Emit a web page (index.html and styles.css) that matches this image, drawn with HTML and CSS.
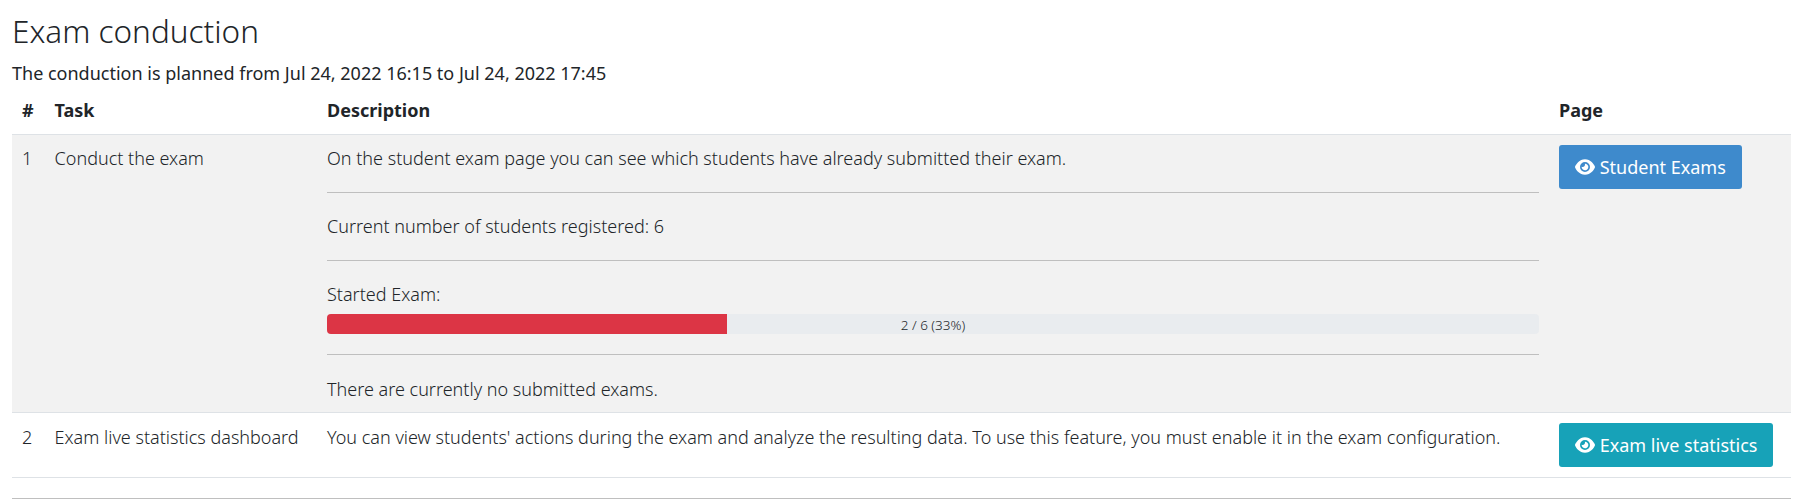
FILE: index.html
```html
<!DOCTYPE html>
<html lang="en">
<head>
<meta charset="utf-8">
<title>Exam conduction</title>
<link rel="stylesheet" href="styles.css">
</head>
<body>
<main class="page">
<h3 class="title">Exam conduction</h3>
<p class="planned">The conduction is planned from Jul 24, 2022 16:15 to Jul 24, 2022 17:45</p>
<table class="table">
<colgroup><col class="col-num"><col class="col-task"><col class="col-desc"><col class="col-page"></colgroup>
<thead><tr><th>#</th><th class="task">Task</th><th>Description</th><th>Page</th></tr></thead>
<tbody>
<tr class="striped">
<td>1</td><td class="task">Conduct the exam</td>
<td>On the student exam page you can see which students have already submitted their exam.
<hr class="rule">
<div>Current number of students registered: 6</div>
<hr class="rule">
<div>Started Exam:</div>
<div class="progress"><div class="bar" style="width:33%"></div><span class="progress-label">2 / 6 (33%)</span></div>
<hr class="rule last">
<div>There are currently no submitted exams.</div></td>
<td><a class="btn primary"><svg class="eye" viewBox="0 0 576 512"><path fill="currentColor" d="M288 32c-80.8 0-145.5 36.8-192.6 80.6C48.6 156 17.3 208 2.5 243.7c-3.3 7.9-3.3 16.7 0 24.6C17.3 304 48.6 356 95.4 399.4C142.5 443.2 207.2 480 288 480s145.5-36.8 192.6-80.6c46.8-43.5 78.1-95.4 93-131.1c3.3-7.9 3.3-16.7 0-24.6c-14.9-35.7-46.2-87.7-93-131.1C433.5 68.8 368.8 32 288 32zM144 256a144 144 0 1 1 288 0 144 144 0 1 1-288 0zm144-64c0 35.3-28.7 64-64 64c-7.1 0-13.9-1.2-20.3-3.3c-5.5-1.8-11.9 1.6-11.7 7.4c.3 6.9 1.3 13.8 3.2 20.7c13.7 51.2 66.4 81.6 117.6 67.9s81.6-66.4 67.9-117.6c-11.1-41.5-47.8-69.4-88.6-71.1c-5.8-.2-9.2 6.1-7.4 11.7c2.1 6.4 3.3 13.2 3.3 20.3z"/></svg> Student Exams</a></td>
</tr>
<tr class="compact">
<td>2</td><td class="task">Exam live statistics dashboard</td>
<td>You can view students' actions during the exam and analyze the resulting data. To use this feature, you must enable it in the exam configuration.</td>
<td class="action"><a class="btn info"><svg class="eye" viewBox="0 0 576 512"><path fill="currentColor" d="M288 32c-80.8 0-145.5 36.8-192.6 80.6C48.6 156 17.3 208 2.5 243.7c-3.3 7.9-3.3 16.7 0 24.6C17.3 304 48.6 356 95.4 399.4C142.5 443.2 207.2 480 288 480s145.5-36.8 192.6-80.6c46.8-43.5 78.1-95.4 93-131.1c3.3-7.9 3.3-16.7 0-24.6c-14.9-35.7-46.2-87.7-93-131.1C433.5 68.8 368.8 32 288 32zM144 256a144 144 0 1 1 288 0 144 144 0 1 1-288 0zm144-64c0 35.3-28.7 64-64 64c-7.1 0-13.9-1.2-20.3-3.3c-5.5-1.8-11.9 1.6-11.7 7.4c.3 6.9 1.3 13.8 3.2 20.7c13.7 51.2 66.4 81.6 117.6 67.9s81.6-66.4 67.9-117.6c-11.1-41.5-47.8-69.4-88.6-71.1c-5.8-.2-9.2 6.1-7.4 11.7c2.1 6.4 3.3 13.2 3.3 20.3z"/></svg> Exam live statistics</a></td>
</tr>
</tbody>
</table>
<hr class="end">
</main>
</body>
</html>
```
FILE: styles.css
```css
* { box-sizing: border-box; }
body { margin: 0; background: #fff; color: #212529; font: 400 18px/27px "Noto Sans", sans-serif; overflow: hidden; }
.page { padding: 12px 22px 0 12px; }
.title { margin: 0 0 10px; font-size: 31.5px; line-height: 38px; font-weight: 300; }
.planned { margin: 0; }
.table { width: 1779px; table-layout: fixed; border-collapse: collapse; border-bottom: 1px solid #dee2e6; }
.col-num { width: 32px; }
.col-task { width: 273px; }
.col-desc { width: 1232px; }
.table th { text-align: left; font-weight: 700; padding: 10px; }
.table td { vertical-align: top; font-weight: 300; padding: 10px; border-top: 1px solid #dee2e6; white-space: nowrap; }
.table .task { padding-left: 10.6px; }
.table .compact td { padding-top: 11px; }
.table .compact .action { padding-top: 10px; }
.striped { background: #f2f2f2; }
.striped td:nth-child(3) { padding-bottom: 9px; }
.rule { margin: 20px 0; border: 0; border-top: 1px solid #bfbfbf; }
.rule.last { margin-bottom: 21px; }
.progress { position: relative; height: 20px; margin-top: 6px; background: #e9ecef; border-radius: 4px; overflow: hidden; }
.bar { height: 100%; background: #dc3545; }
.progress-label { position: absolute; inset: 0; text-align: center; font-size: 13.5px; line-height: 22px; }
.btn { display: inline-block; padding: 8px 16px; border-radius: 3px; color: #fff; font-weight: 400; line-height: 28px; }
.primary { background: #3e8acc; }
.info { background: #17a2b8; }
.eye { width: 20px; height: 18px; vertical-align: -2px; }
.end { margin: 20px 0 0; border: 0; border-top: 1px solid #bfbfbf; }
```
